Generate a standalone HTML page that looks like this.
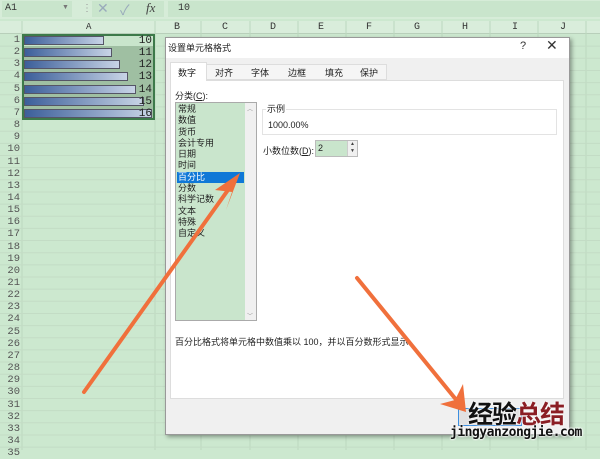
<!DOCTYPE html>
<html><head><meta charset="utf-8"><style>
*{margin:0;padding:0;box-sizing:border-box}
body{width:600px;height:450px;overflow:hidden;background:#cce8cf;font-family:"Liberation Sans","Noto Sans CJK SC",sans-serif;position:relative}
.a{position:absolute}
.cj{font-family:"Liberation Sans","Noto Sans CJK SC",sans-serif;font-size:9px;color:#222}
.mono{font-family:"Liberation Mono","DejaVu Sans Mono",monospace;font-size:10px;color:#333}
.li{height:11.3px;line-height:11.3px}
</style></head><body>
<div class="a" style="left:0;top:0;width:600px;height:19px;background:#d6ecd8"></div>
<div class="a" style="left:2px;top:1px;width:70px;height:16px;background:#c9e5cc"></div>
<div class="a mono" style="left:5px;top:3px">A1</div>
<div class="a" style="left:62px;top:4px;font-size:7px;color:#777">▼</div>
<div class="a" style="left:82px;top:3px;color:#999;font-size:10px">⋮</div>
<div class="a" style="left:92px;top:1px;width:72px;height:16px;background:#c9e5cc"></div>
<div class="a" style="left:97px;top:0px;color:#9ab;font-size:14px">✕</div>
<div class="a" style="left:120px;top:0px;color:#9ab;font-size:14px">✓</div>
<div class="a" style="left:146px;top:0px;color:#444;font-size:13px;font-style:italic;font-family:'Liberation Serif',serif">fx</div>
<div class="a" style="left:168px;top:1px;width:432px;height:16px;background:#c9e5cc"></div>
<div class="a mono" style="left:178px;top:3px">10</div>
<div class="a" style="left:0;top:21px;width:600px;height:13px;background:#d9eddb;border-bottom:1px solid #b8cfba"></div>
<svg class="a" style="left:0;top:0" width="600" height="450">
<g stroke="#bcd8bf" stroke-width="1">
<line x1="22" y1="21" x2="22" y2="450"/><line x1="155" y1="21" x2="155" y2="450"/>
<line x1="201" y1="21" x2="201" y2="450"/><line x1="250" y1="21" x2="250" y2="450"/><line x1="298" y1="21" x2="298" y2="450"/><line x1="346" y1="21" x2="346" y2="450"/><line x1="394" y1="21" x2="394" y2="450"/><line x1="442" y1="21" x2="442" y2="450"/><line x1="490" y1="21" x2="490" y2="450"/><line x1="538" y1="21" x2="538" y2="450"/><line x1="586" y1="21" x2="586" y2="450"/>
</g>
<g stroke="#c3dcc5" id="rows"></g>
</svg>
<div class="a mono" style="left:86px;top:22px;font-size:9px">A</div>
<div class="a mono" style="left:174px;top:22px">B</div>
<div class="a mono" style="left:222px;top:22px">C</div>
<div class="a mono" style="left:270px;top:22px">D</div>
<div class="a mono" style="left:318px;top:22px">E</div>
<div class="a mono" style="left:366px;top:22px">F</div>
<div class="a mono" style="left:414px;top:22px">G</div>
<div class="a mono" style="left:462px;top:22px">H</div>
<div class="a mono" style="left:512px;top:22px">I</div>
<div class="a mono" style="left:560px;top:22px">J</div>
<div id="rn"></div>
<div class="a" style="left:22px;top:34px;width:133px;height:86px;background:#9fbfa2;border:2px solid #3d7a4a"></div>
<div class="a" style="left:24px;top:36px;width:129px;height:10px;background:#c9e5cc"></div>
<div id="bars"></div>
<div class="a" style="left:165px;top:37px;width:405px;height:398px;background:#f0f0f0;border:1px solid #999;box-shadow:2px 2px 4px rgba(0,0,0,.35)"></div>
<div class="a" style="left:166px;top:38px;width:403px;height:20px;background:#fff"></div>
<div class="a cj" style="left:168px;top:41px">设置单元格格式</div>
<div class="a" style="left:520px;top:40px;font-size:11px;color:#333">?</div>
<div class="a" style="left:546px;top:37px;font-size:14px;color:#333">✕</div>
<div class="a" style="left:170px;top:80px;width:394px;height:319px;background:#fff;border:1px solid #ddd"></div>
<div class="a" style="left:207px;top:64px;width:180px;height:16px;border:1px solid #ddd;border-left:none;background:#f5f5f5"></div>
<div class="a" style="left:170px;top:62px;width:37px;height:19px;background:#fff;border:1px solid #ddd;border-bottom:none"></div>
<div class="a cj" style="left:178px;top:66px">数字</div>
<div class="a cj" style="left:215px;top:66px">对齐</div>
<div class="a cj" style="left:251px;top:66px">字体</div>
<div class="a cj" style="left:288px;top:66px">边框</div>
<div class="a cj" style="left:325px;top:66px">填充</div>
<div class="a cj" style="left:360px;top:66px">保护</div>
<div class="a cj" style="left:175px;top:89px">分类(<u>C</u>):</div>
<div class="a" style="left:175px;top:102px;width:82px;height:219px;background:#c9e5cc;border:1px solid #aaa"></div>
<div class="a" style="left:245px;top:103px;width:11px;height:217px;background:#f0f0f0"></div>
<div class="a" style="left:247px;top:104px;font-size:6px;color:#999">︿</div>
<div class="a" style="left:247px;top:311px;font-size:6px;color:#999">﹀</div>
<div class="a" style="left:177px;top:172px;width:67px;height:11px;background:#0f78d7"></div>
<div class="a cj" style="left:178px;top:104px">
<div class="li">常规</div><div class="li">数值</div><div class="li">货币</div><div class="li">会计专用</div><div class="li">日期</div><div class="li">时间</div><div class="li" style="color:#fff">百分比</div><div class="li">分数</div><div class="li">科学记数</div><div class="li">文本</div><div class="li">特殊</div><div class="li">自定义</div></div>
<div class="a" style="left:262px;top:109px;width:295px;height:26px;border:1px solid #e3e3e3"></div>
<div class="a cj" style="left:266px;top:102px;background:#fff;padding:0 1px">示例</div>
<div class="a cj" style="left:268px;top:120px;font-size:9px">1000.00%</div>
<div class="a cj" style="left:263px;top:144px">小数位数(<u>D</u>):</div>
<div class="a" style="left:315px;top:140px;width:43px;height:17px;border:1px solid #bbb;background:#c9e5cc"></div>
<div class="a cj" style="left:318px;top:143px">2</div>
<div class="a" style="left:347px;top:141px;width:10px;height:15px;background:#f0f0f0;border-left:1px solid #ccc;font-size:5px;color:#444;text-align:center;line-height:7px">▲<br>▼</div>
<div class="a cj" style="left:175px;top:335px">百分比格式将单元格中数值乘以 100，并以百分数形式显示。</div>
<div class="a" style="left:458px;top:408px;width:64px;height:18px;border:1px solid #3b8ee0;background:#e1e1e1"></div>
<svg class="a" style="left:0;top:0" width="600" height="450">
<g stroke="#f0703c" stroke-width="4" stroke-linecap="round" fill="#f0703c">
<line x1="84" y1="392" x2="228" y2="190"/>
<line x1="357" y1="278" x2="458" y2="402"/>
</g>
<polygon points="240,173 215,190 232,192 226,210" fill="#f0703c"/>
<polygon points="466,412 440,404 455,400 463,384" fill="#f0703c"/>
</svg>
<div class="a" style="left:468px;top:395px;font-size:25px;font-weight:bold;letter-spacing:-1px;font-family:'Noto Sans CJK SC',sans-serif;color:#111;text-shadow:0 0 2px #fff,0 0 2px #fff">经验<span style="color:#8b1e24">总结</span></div>
<div class="a" style="left:450px;top:425px;font-size:13px;font-weight:bold;color:#111;font-family:'DejaVu Sans Mono',monospace;letter-spacing:-0.5px;text-shadow:0 0 2px #fff,0 0 2px #fff,0 0 2px #fff">jingyanzongjie.com</div>
<script>
var s='',r='';
for(var i=1;i<=35;i++){var y=34+(i-1)*12.15;
s+='<div class="a mono" style="left:0;top:'+(y+1)+'px;width:20px;text-align:right;font-size:10.5px;color:#555;line-height:11px">'+i+'</div>';
r+='<line x1="0" y1="'+(y+12.15)+'" x2="600" y2="'+(y+12.15)+'"/>';}
document.getElementById('rn').innerHTML=s;
document.getElementById('rows').innerHTML=r;
var b='';var w=[80,88,96,104,112,120,128];
for(var k=0;k<7;k++){var y=35+k*12.15;
b+='<div class="a" style="left:24px;top:'+(y+1)+'px;width:'+w[k]+'px;height:9px;border:1px solid #556;background:linear-gradient(90deg,#3c5f9a,#c8d4e6)"></div>';
b+='<div class="a mono" style="left:130px;top:'+(y)+'px;width:22px;text-align:right;font-size:11px;color:#222">'+(10+k)+'</div>';}
document.getElementById('bars').innerHTML=b;
</script>
</body></html>
